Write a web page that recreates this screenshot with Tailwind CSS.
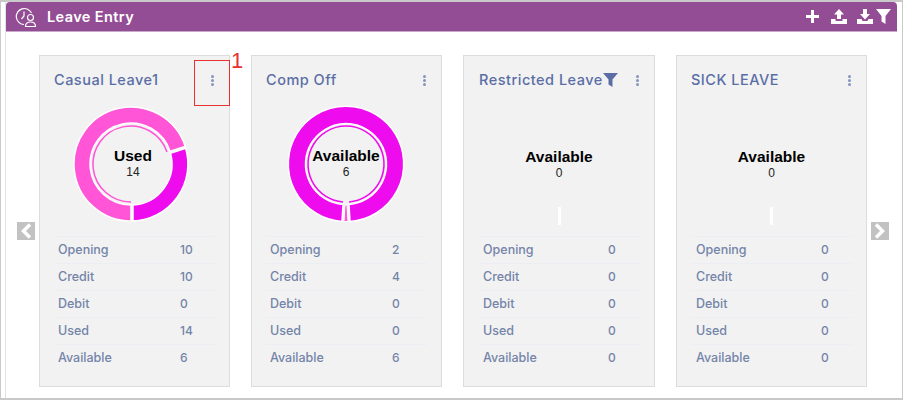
<!DOCTYPE html>
<html lang="en">
<head>
  <meta charset="UTF-8" />
  <title>Leave Entry</title>
  <script src="https://cdn.jsdelivr.net/npm/@tailwindcss/browser@4"></script>
</head>
<body class="bg-white font-['Inter',sans-serif] w-[903px] h-[400px] overflow-hidden">
  <div class="h-[400px] border-t-2 border-b-2 border-l border-r border-[#c9c9c9] pl-1">
    <div class="h-[396px] border-l border-[#dfe3ea] relative">

      <!-- Header -->
      <div class="w-[891px] h-[30px] bg-[#934d94] rounded-t-sm border-b border-[#c9a9ca] flex items-center pl-[9px] pr-[6px] text-white">
        <svg class="w-[22px] h-[22px]" viewBox="0 0 22 22" fill="none" stroke="currentColor" stroke-width="1.2">
          <path d="M9 18.500A8 8 0 1 1 16.500 7" />
          <path d="M9 5.500V10L6.500 13" />
          <circle cx="15.500" cy="11.500" r="3" />
          <path d="M10.500 20.500c0-3 2-4.500 5-4.500s5 1.500 5 4.500z" />
        </svg>
        <span class="ml-[10px] text-[14.500px] font-semibold tracking-[0.4px] whitespace-nowrap">Leave Entry</span>
        <div class="ml-auto flex items-center">
          <svg class="w-[13px] h-[13px]" viewBox="0 0 13 13" fill="currentColor"><path d="M5 0h3v5h5v3H8v5H5V8H0V5h5z" /></svg>
          <svg class="w-[16px] h-[15px] ml-[12px]" viewBox="0 0 16 15" fill="currentColor"><path d="M8 0l5 5.500H10V10H6V5.500H3zM0 10h4.500v2h7v-2H16v5H0z" /></svg>
          <svg class="w-[16px] h-[15px] ml-[10px]" viewBox="0 0 16 15" fill="currentColor"><path d="M6 0h4v5h3l-5 5.500L3 5h3zM0 10h4.500l1 2h5l1-2H16v5H0z" /></svg>
          <svg class="w-[15px] h-[15px] ml-[3px]" viewBox="0 0 15 15" fill="currentColor"><path d="M0 0h15L9.500 7v8L5.500 12.500V7z" /></svg>
        </div>
      </div>

      <!-- Cards -->
      <div class="flex items-start pl-[11px] pt-[23px]">
        <div class="w-[18px] h-[18px] bg-[#c2c2c2] mt-[167px] mr-[4px] flex items-center justify-center">
          <svg class="w-[12px] h-[16px]" viewBox="0 0 12 16" fill="none" stroke="white" stroke-width="3.500"><path d="M10 1.500L3.500 8l6.500 6.500" /></svg>
        </div>

        <div class="flex gap-[21px]">
          <!-- Casual Leave1 -->
          <div class="w-[191px] h-[332px] bg-[#f2f2f2] border border-[#dcdcdc] relative">
            <div class="flex items-center h-[48px] pl-[14px] pr-[15px] text-[#5a6ea5]">
              <span class="text-[14.500px] font-medium tracking-[0.5px] whitespace-nowrap">Casual Leave1</span>
              <span class="ml-auto flex flex-col gap-[1px]">
                <span class="w-[3px] h-[3px] rounded-full bg-[#8494ba]"></span>
                <span class="w-[3px] h-[3px] rounded-full bg-[#8494ba]"></span>
                <span class="w-[3px] h-[3px] rounded-full bg-[#8494ba]"></span>
              </span>
            </div>
            <div class="h-[132px] flex justify-center relative">
              <svg class="w-[120px] h-[120px] mr-[7px]" viewBox="-60 -60 120 120">
                <g stroke="white" stroke-width="1.500">
                  <path fill="#ff55d6" d="M0 57A57 57 0 1 1 54.200 -17.600L39 -12.700A41 41 0 1 0 0 41z" />
                  <path fill="#ee0cee" d="M2 41A41 41 0 0 0 39.500 -10.700L54.700 -15.700A57 57 0 0 1 2 57z" />
                </g>
                <path fill="none" stroke="#ff55d6" stroke-width="1.500" d="M0 38A38 38 0 1 1 36 -12" />
              </svg>
              <div class="absolute top-[43px] left-0 right-0 pr-[3px] text-center font-['Liberation_Sans',sans-serif] text-black">
                <p class="text-[15.500px] font-bold leading-[18px]">Used</p>
                <p class="text-[12px] leading-[15px] text-[#222]">14</p>
              </div>
            </div>
            <div class="px-[14px] text-[12.500px] font-medium text-[#7484a9]">
              <div class="flex items-center h-[27px] border-t border-[#eceef3] pl-[4px]"><span class="w-[122px]">Opening</span><span class="text-[12px]">10</span></div>
              <div class="flex items-center h-[27px] border-t border-[#eceef3] pl-[4px]"><span class="w-[122px]">Credit</span><span class="text-[12px]">10</span></div>
              <div class="flex items-center h-[27px] border-t border-[#eceef3] pl-[4px]"><span class="w-[122px]">Debit</span><span class="text-[12px]">0</span></div>
              <div class="flex items-center h-[27px] border-t border-[#eceef3] pl-[4px]"><span class="w-[122px]">Used</span><span class="text-[12px]">14</span></div>
              <div class="flex items-center h-[27px] border-t border-[#eceef3] pl-[4px]"><span class="w-[122px]">Available</span><span class="text-[12px]">6</span></div>
            </div>
            <!-- annotation -->
            <div class="absolute left-[154px] top-[4px] w-[36px] h-[46px] border border-[#e8322f]"></div>
            <span class="absolute left-[191px] top-[-8px] font-['Liberation_Sans',sans-serif] text-[22px] leading-[26px] text-[#e8322f]">1</span>
          </div>

          <!-- Comp Off -->
          <div class="w-[191px] h-[332px] bg-[#f2f2f2] border border-[#dcdcdc]">
            <div class="flex items-center h-[48px] pl-[14px] pr-[15px] text-[#5a6ea5]">
              <span class="text-[14.500px] font-medium tracking-[0.5px] whitespace-nowrap">Comp Off</span>
              <span class="ml-auto flex flex-col gap-[1px]">
                <span class="w-[3px] h-[3px] rounded-full bg-[#8494ba]"></span>
                <span class="w-[3px] h-[3px] rounded-full bg-[#8494ba]"></span>
                <span class="w-[3px] h-[3px] rounded-full bg-[#8494ba]"></span>
              </span>
            </div>
            <div class="h-[132px] flex justify-center relative">
              <svg class="w-[120px] h-[120px] mr-[2px]" viewBox="-60 -60 120 120">
                <g stroke="white" stroke-width="1.500">
                  <path fill="#ee0cee" d="M-4 57.500A57.700 57.700 0 1 1 4 57.500L3 40.500A40.500 40.500 0 1 0 -3 40.500z" />
                  <path fill="#ff55d6" d="M-2 57.500L-1 41H1L2 57.500z" stroke-width="1" />
                </g>
                <path fill="none" stroke="#ee0cee" stroke-width="1.500" d="M-3 38A38 38 0 1 1 3 38" />
              </svg>
              <div class="absolute top-[43px] left-0 right-0 pr-[1px] text-center font-['Liberation_Sans',sans-serif] text-black">
                <p class="text-[15.500px] font-bold leading-[18px]">Available</p>
                <p class="text-[12px] leading-[15px] text-[#222]">6</p>
              </div>
            </div>
            <div class="px-[14px] text-[12.500px] font-medium text-[#7484a9]">
              <div class="flex items-center h-[27px] border-t border-[#eceef3] pl-[4px]"><span class="w-[122px]">Opening</span><span class="text-[12px]">2</span></div>
              <div class="flex items-center h-[27px] border-t border-[#eceef3] pl-[4px]"><span class="w-[122px]">Credit</span><span class="text-[12px]">4</span></div>
              <div class="flex items-center h-[27px] border-t border-[#eceef3] pl-[4px]"><span class="w-[122px]">Debit</span><span class="text-[12px]">0</span></div>
              <div class="flex items-center h-[27px] border-t border-[#eceef3] pl-[4px]"><span class="w-[122px]">Used</span><span class="text-[12px]">0</span></div>
              <div class="flex items-center h-[27px] border-t border-[#eceef3] pl-[4px]"><span class="w-[122px]">Available</span><span class="text-[12px]">6</span></div>
            </div>
          </div>

          <!-- Restricted Leave -->
          <div class="w-[192px] h-[332px] bg-[#f2f2f2] border border-[#dcdcdc]">
            <div class="flex items-center h-[48px] pl-[15px] pr-[15px] text-[#5a6ea5]">
              <span class="text-[14.500px] font-medium tracking-[0.5px] whitespace-nowrap">Restricted Leave</span>
              <svg class="w-[15px] h-[14px] shrink-0" viewBox="0 0 15 14" fill="currentColor"><path d="M0 0h15L9.500 6.500V14L5.500 11.500V6.500z" /></svg>
              <span class="ml-auto flex flex-col gap-[1px]">
                <span class="w-[3px] h-[3px] rounded-full bg-[#8494ba]"></span>
                <span class="w-[3px] h-[3px] rounded-full bg-[#8494ba]"></span>
                <span class="w-[3px] h-[3px] rounded-full bg-[#8494ba]"></span>
              </span>
            </div>
            <div class="h-[132px] flex flex-col items-center pt-[44px] font-['Liberation_Sans',sans-serif] text-black">
              <p class="text-[15.500px] font-bold leading-[18px]">Available</p>
              <p class="text-[12px] leading-[15px] text-[#222]">0</p>
              <span class="w-[3px] h-[18px] bg-white mt-[26px]"></span>
            </div>
            <div class="px-[14px] text-[12.500px] font-medium text-[#7484a9]">
              <div class="flex items-center h-[27px] border-t border-[#eceef3] pl-[5px]"><span class="w-[125px]">Opening</span><span class="text-[12px]">0</span></div>
              <div class="flex items-center h-[27px] border-t border-[#eceef3] pl-[5px]"><span class="w-[125px]">Credit</span><span class="text-[12px]">0</span></div>
              <div class="flex items-center h-[27px] border-t border-[#eceef3] pl-[5px]"><span class="w-[125px]">Debit</span><span class="text-[12px]">0</span></div>
              <div class="flex items-center h-[27px] border-t border-[#eceef3] pl-[5px]"><span class="w-[125px]">Used</span><span class="text-[12px]">0</span></div>
              <div class="flex items-center h-[27px] border-t border-[#eceef3] pl-[5px]"><span class="w-[125px]">Available</span><span class="text-[12px]">0</span></div>
            </div>
          </div>

          <!-- SICK LEAVE -->
          <div class="w-[191px] h-[332px] bg-[#f2f2f2] border border-[#dcdcdc]">
            <div class="flex items-center h-[48px] pl-[14px] pr-[15px] text-[#5a6ea5]">
              <span class="text-[14.500px] font-medium tracking-[0.5px] whitespace-nowrap">SICK LEAVE</span>
              <span class="ml-auto flex flex-col gap-[1px]">
                <span class="w-[3px] h-[3px] rounded-full bg-[#8494ba]"></span>
                <span class="w-[3px] h-[3px] rounded-full bg-[#8494ba]"></span>
                <span class="w-[3px] h-[3px] rounded-full bg-[#8494ba]"></span>
              </span>
            </div>
            <div class="h-[132px] flex flex-col items-center pt-[44px] font-['Liberation_Sans',sans-serif] text-black">
              <p class="text-[15.500px] font-bold leading-[18px]">Available</p>
              <p class="text-[12px] leading-[15px] text-[#222]">0</p>
              <span class="w-[3px] h-[18px] bg-white mt-[26px]"></span>
            </div>
            <div class="px-[14px] text-[12.500px] font-medium text-[#7484a9]">
              <div class="flex items-center h-[27px] border-t border-[#eceef3] pl-[5px]"><span class="w-[125px]">Opening</span><span class="text-[12px]">0</span></div>
              <div class="flex items-center h-[27px] border-t border-[#eceef3] pl-[5px]"><span class="w-[125px]">Credit</span><span class="text-[12px]">0</span></div>
              <div class="flex items-center h-[27px] border-t border-[#eceef3] pl-[5px]"><span class="w-[125px]">Debit</span><span class="text-[12px]">0</span></div>
              <div class="flex items-center h-[27px] border-t border-[#eceef3] pl-[5px]"><span class="w-[125px]">Used</span><span class="text-[12px]">0</span></div>
              <div class="flex items-center h-[27px] border-t border-[#eceef3] pl-[5px]"><span class="w-[125px]">Available</span><span class="text-[12px]">0</span></div>
            </div>
          </div>
        </div>

        <div class="w-[18px] h-[18px] bg-[#c2c2c2] mt-[167px] ml-[4px] flex items-center justify-center">
          <svg class="w-[12px] h-[16px]" viewBox="0 0 12 16" fill="none" stroke="white" stroke-width="3.500"><path d="M2 1.500L8.500 8 2 14.500" /></svg>
        </div>
      </div>
    </div>
  </div>
</body>
</html>
